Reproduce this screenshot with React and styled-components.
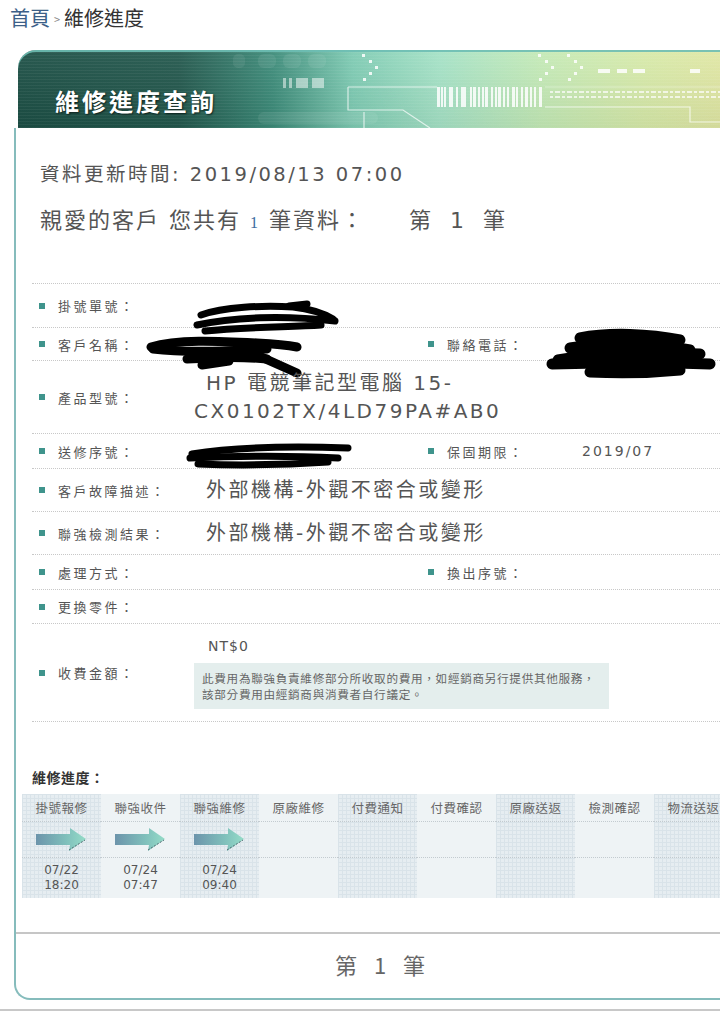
import React from 'react'
import styled, { createGlobalStyle } from 'styled-components'

const GlobalStyle = createGlobalStyle`
  html, body { margin:0; padding:0; background:#fff; }
  body {
    font-family: "DejaVu Sans", "Noto Sans CJK TC", sans-serif;
    color:#555;
    overflow:hidden;
  }
  #root { width:720px; height:1012px; overflow:hidden; }
`

const steps = [
  { name: '掛號報修', done: true, date: '07/22', time: '18:20' },
  { name: '聯強收件', done: true, date: '07/24', time: '07:47' },
  { name: '聯強維修', done: true, date: '07/24', time: '09:40' },
  { name: '原廠維修' },
  { name: '付費通知' },
  { name: '付費確認' },
  { name: '原廠送返' },
  { name: '檢測確認' },
  { name: '物流送返' },
]

// black marker strokes that hide personal data in the screenshot
const scribbles = {
  order: { x: -1, y: 9, w: 148, h: 36, sw: 7, paths: [
    'M8 14 C30 6 70 4 100 6 C118 8 130 12 140 18',
    'M4 24 C40 16 90 14 142 20',
    'M12 30 C50 26 95 26 128 24',
    'M96 5 L114 3',
  ] },
  nameL: { x: -47, y: 5, w: 158, h: 42, sw: 9, paths: [
    'M4 12 C30 4 70 6 110 8 C130 9 140 10 150 12',
    'M6 14 C40 18 80 16 120 14',
    'M40 24 C70 22 100 22 120 24',
    'M92 12 L150 38',
    'M55 30 L82 26',
  ] },
  nameR: { x: -32, y: 0, w: 166, h: 52, sw: 11, paths: [
    'M30 8 C60 2 100 4 130 10',
    'M20 18 C60 12 110 14 140 20',
    'M8 30 C40 24 90 22 150 24',
    'M2 34 C60 32 120 32 160 34',
    'M40 42 C80 44 110 42 130 40',
  ] },
  serial: { x: -6, y: 5, w: 164, h: 30, sw: 7, paths: [
    'M4 12 C40 6 100 4 160 6',
    'M2 16 C50 14 110 14 150 16',
    'M10 22 C60 24 110 22 140 20',
  ] },
}

function Scribble({ kind }) {
  const s = scribbles[kind]
  return (
    <RedactMark $x={s.x} $y={s.y} width={s.w} height={s.h} viewBox={`0 0 ${s.w} ${s.h}`}>
      {s.paths.map((d, i) => (
        <path key={i} d={d} fill="none" stroke="#000" strokeWidth={s.sw} strokeLinecap="round" />
      ))}
    </RedactMark>
  )
}

function StepArrow() {
  const id = React.useId()
  return (
    <svg width="50" height="23" viewBox="0 0 50 23">
      <defs>
        <linearGradient id={id} x1="0" x2="1" y1="0" y2="0">
          <stop offset="0" stopColor="#6c94ab" />
          <stop offset="0.6" stopColor="#7fbfbb" />
          <stop offset="1" stopColor="#95dcc8" />
        </linearGradient>
      </defs>
      <path d="M0 6 H34 L34 0 L50 11 L33 23 L34 17 H0 Z" fill={`url(#${id})`} />
      <path d="M33 22 L49 12" stroke="#4f6a70" strokeWidth="1" strokeDasharray="2 1.5" />
    </svg>
  )
}

function BannerArt() {
  const dots = (x) => [[x, 4], [x + 7, 10], [x + 13, 16], [x + 7, 22], [x + 1, 28]]
  const bars = [0, 4, 7, 12, 14, 19, 24, 27, 33, 36, 41, 45, 48, 54, 58, 61, 66, 70, 75, 79, 84, 88, 93, 97, 102]
  return (
    <Art viewBox="0 0 728 78" preserveAspectRatio="none">
      <g fill="#fff" opacity="0.07">
        <rect x="215" y="4" width="12" height="14" rx="5" />
        <rect x="240" y="4" width="18" height="14" rx="6" />
        <rect x="265" y="4" width="18" height="14" rx="6" />
        <rect x="290" y="4" width="18" height="14" rx="6" />
        <rect x="240" y="62" width="120" height="12" rx="6" />
      </g>
      <g fill="#fff" opacity="0.5">
        <rect x="265" y="28" width="3" height="10" />
        <rect x="271" y="28" width="3" height="10" />
        <rect x="278" y="28" width="12" height="10" />
        <rect x="294" y="28" width="12" height="10" />
      </g>
      <g fill="none" stroke="#fff" strokeWidth="1.2" opacity="0.7">
        <path d="M330 37 H419" />
        <path d="M330 37 V60 H385 L412 78" />
        <path d="M346 78 V62" />
        <path d="M527 57 H672 V72 H728" />
        <path d="M527 37 H728" opacity="0.5" />
      </g>
      <g fill="#fff" opacity="0.85">
        {[...dots(344), ...dots(520), ...dots(549)].map(([x, y], i) => (
          <rect key={i} x={x} y={y} width="3" height="3" />
        ))}
        <rect x="580" y="19" width="12" height="4" />
        <rect x="599" y="19" width="10" height="4" />
        <rect x="615" y="19" width="12" height="4" />
        <rect x="672" y="19" width="10" height="4" />
        {bars.map((b, i) => (
          <rect key={i} x={419 + b} y="37" width={i % 3 === 0 ? 3 : 2} height="20" />
        ))}
      </g>
      <g fill="none" stroke="#fff" strokeWidth="2" strokeDasharray="3 2 5 2" opacity="0.7">
        <path d="M532 42 H725" />
        <path d="M532 47 H725" />
      </g>
    </Art>
  )
}

function App() {
  return (
    <Page>
      <GlobalStyle />
      <Crumb>
        <Home>首頁</Home>
        <Sep>&gt;</Sep>
        維修進度
      </Crumb>

      <Card>
        <Banner>
          <BannerArt />
          <BannerTitle>維修進度查詢</BannerTitle>
        </Banner>

        <Panel>
          <Intro>
            <UpdateLine>資料更新時間: 2019/08/13 07:00</UpdateLine>
            <CountLine>
              親愛的客戶 您共有 <Count>1</Count> 筆資料：<Nth>第 1 筆</Nth>
            </CountLine>
          </Intro>

          <Table>
            <Row $h={44}>
              <Label>掛號單號：</Label>
              <Value><Scribble kind="order" /></Value>
            </Row>
            <Row $h={33} $pair>
              <Label>客戶名稱：</Label>
              <Value><Scribble kind="nameL" /></Value>
              <Label>聯絡電話：</Label>
              <Value $small><Scribble kind="nameR" /></Value>
            </Row>
            <Row $h={73}>
              <Label>產品型號：</Label>
              <Value>
                <Line $indent>HP 電競筆記型電腦 15-</Line>
                <Line>CX0102TX/4LD79PA#AB0</Line>
              </Value>
            </Row>
            <Row $h={35} $pair>
              <Label>送修序號：</Label>
              <Value><Scribble kind="serial" /></Value>
              <Label>保固期限：</Label>
              <Value $small>2019/07</Value>
            </Row>
            <Row $h={43}>
              <Label>客戶故障描述：</Label>
              <Value><Line $indent>外部機構-外觀不密合或變形</Line></Value>
            </Row>
            <Row $h={43}>
              <Label>聯強檢測結果：</Label>
              <Value><Line $indent>外部機構-外觀不密合或變形</Line></Value>
            </Row>
            <Row $h={35} $pair>
              <Label>處理方式：</Label>
              <Value />
              <Label>換出序號：</Label>
              <Value $small />
            </Row>
            <Row $h={34}>
              <Label>更換零件：</Label>
              <Value />
            </Row>
            <Row $h={98}>
              <Label>收費金額：</Label>
              <Value>
                <Amount>NT$0</Amount>
                <Note>
                  此費用為聯強負責維修部分所收取的費用，如經銷商另行提供其他服務，<br />
                  該部分費用由經銷商與消費者自行議定。
                </Note>
              </Value>
            </Row>
          </Table>

          <ProgressTitle>維修進度：</ProgressTitle>
          <Progress>
            {steps.map((s, i) => (
              <Step key={s.name} $grid={i % 2 === 0}>
                <StepHead>{s.name}</StepHead>
                <StepMark>{s.done && <StepArrow />}</StepMark>
                <StepDate>
                  {s.done && (<>{s.date}<br />{s.time}</>)}
                </StepDate>
              </Step>
            ))}
          </Progress>

          <Pager>第 1 筆</Pager>
        </Panel>
      </Card>
      <PageRule />
    </Page>
  )
}

export default App

const Page = styled.div`
  width: 760px;
`

const Crumb = styled.div`
  height: 30px;
  padding: 6px 10px 0;
  box-sizing: border-box;
  margin-bottom: 20px;
  font-family: "Noto Sans CJK TC", sans-serif;
  font-size: 20px;
  line-height: 24px;
  color: #333;
`

const Home = styled.a`
  color: #3c5f88;
  text-decoration: none;
`

const Sep = styled.span`
  font-size: 11px;
  color: #888;
  margin: 0 4px;
  vertical-align: 2px;
`

const Card = styled.div`
  margin-left: 14px;
  width: 732px;
`

const Banner = styled.div`
  position: relative;
  overflow: hidden;
  margin-left: 4px;
  height: 78px;
  box-sizing: border-box;
  border-top-left-radius: 18px;
  display: flex;
  align-items: flex-end;
  padding: 0 0 13px 37px;
  background:
    repeating-linear-gradient(0deg, rgba(255,255,255,0.05) 0 1px, transparent 1px 3px),
    linear-gradient(180deg, rgba(255,255,255,0.06), rgba(0,0,0,0.06)),
    linear-gradient(90deg, #1c4f45 0%, #22574c 22%, #3c8b79 35%, #7ecbb3 46%, #a5e2c6 58%, #c4eab6 72%, #d7eaa9 86%, #e3e6a2 100%);
  box-shadow: inset 0 2px 0 rgba(110, 190, 180, 0.9);
`

const Art = styled.svg`
  position: absolute;
  inset: 0;
  width: 100%;
  height: 100%;
`

const BannerTitle = styled.div`
  position: relative;
  font-family: "Noto Sans CJK TC", sans-serif;
  font-weight: 700;
  font-size: 24px;
  line-height: 28px;
  letter-spacing: 3px;
  color: #fff;
  text-shadow: 1px 1px 2px rgba(0, 0, 0, 0.65);
`

const Panel = styled.div`
  border-left: 2px solid #86bcbc;
  border-bottom: 2px solid #86bcbc;
  border-bottom-left-radius: 16px;
`

const Intro = styled.div`
  padding: 32px 0 0 24px;
`

const UpdateLine = styled.div`
  font-size: 19.5px;
  line-height: 30px;
  letter-spacing: 2.5px;
  color: #555;
`

const CountLine = styled.div`
  margin-top: 14px;
  font-size: 22px;
  line-height: 34px;
  letter-spacing: 2px;
  color: #555;
  white-space: nowrap;
`

const Count = styled.span`
  font-size: 16px;
  color: #3b6aa0;
  font-family: "Liberation Serif", serif;
`

const Nth = styled.span`
  margin-left: 44px;
  word-spacing: 8px;
`

const Table = styled.div`
  margin: 43px 0 0 16px;
  border-top: 1px dotted #c8c8c8;
`

const Row = styled.div`
  display: grid;
  grid-template-columns: ${p => (p.$pair ? '162px 227px 161px 1fr' : '162px 1fr')};
  align-items: center;
  height: ${p => p.$h}px;
  box-sizing: border-box;
  border-bottom: 1px dotted #c8c8c8;
`

const Label = styled.div`
  display: flex;
  align-items: center;
  padding-left: 7px;
  font-size: 13px;
  letter-spacing: 2.5px;
  color: #555;
  white-space: nowrap;

  &::before {
    content: "";
    width: 6px;
    height: 6px;
    margin-right: 13px;
    background: #3f948c;
  }
`

const Value = styled.div`
  position: relative;
  font-size: ${p => (p.$small ? '14px' : '20px')};
  letter-spacing: ${p => (p.$small ? '2px' : '2.5px')};
  line-height: 28px;
  color: #555;
  white-space: nowrap;
  min-height: 20px;
`

const Line = styled.div`
  padding-left: ${p => (p.$indent ? '12px' : '0')};
`

const RedactMark = styled.svg`
  position: absolute;
  left: ${p => p.$x}px;
  top: ${p => p.$y - 4}px;
  overflow: visible;
`

const Amount = styled.div`
  padding-left: 14px;
  font-size: 14px;
  line-height: 20px;
  letter-spacing: 1px;
`

const Note = styled.div`
  margin-top: 7px;
  width: 415px;
  height: 46px;
  box-sizing: border-box;
  padding: 7px 8px;
  background: #e4eeed;
  font-family: "Noto Sans CJK TC", sans-serif;
  font-size: 11.6px;
  line-height: 16px;
  letter-spacing: 0.7px;
  color: #666;
`

const ProgressTitle = styled.div`
  margin: 45px 0 0 16px;
  font-family: "Noto Sans CJK TC", sans-serif;
  font-weight: 700;
  font-size: 14px;
  line-height: 20px;
  letter-spacing: 0.5px;
  color: #333;
`

const Progress = styled.div`
  margin: 7px 0 0 6px;
  display: grid;
  grid-template-columns: repeat(9, 79px);
`

const Step = styled.div`
  display: flex;
  flex-direction: column;
  background-color: ${p => (p.$grid ? '#e6edf1' : '#eef3f5')};
  background-image: ${p => (p.$grid
    ? 'linear-gradient(#d9e3e9 1px, transparent 1px), linear-gradient(90deg, #d9e3e9 1px, transparent 1px)'
    : 'none')};
  background-size: 4px 4px;
`

const StepHead = styled.div`
  height: 28px;
  box-sizing: border-box;
  border-bottom: 1px dotted #c3cbd0;
  display: flex;
  align-items: center;
  justify-content: center;
  font-family: "Noto Sans CJK TC", sans-serif;
  font-size: 12.5px;
  letter-spacing: 0.5px;
  color: #666;
`

const StepMark = styled.div`
  height: 36px;
  box-sizing: border-box;
  border-bottom: 1px dotted #c3cbd0;
  display: flex;
  align-items: center;
  justify-content: center;
  padding-right: 1px;
`

const StepDate = styled.div`
  height: 40px;
  display: flex;
  align-items: center;
  justify-content: center;
  text-align: center;
  font-size: 12px;
  line-height: 15px;
  color: #555;
`

const Pager = styled.div`
  margin-top: 34px;
  border-top: 2px solid #c6c6c6;
  height: 64px;
  line-height: 60px;
  text-align: center;
  font-family: "Noto Sans CJK TC", sans-serif;
  font-size: 22px;
  word-spacing: 8px;
  letter-spacing: 2px;
  color: #666;
`

const PageRule = styled.div`
  margin-top: 9px;
  border-top: 2px solid #c8c8c8;
`
